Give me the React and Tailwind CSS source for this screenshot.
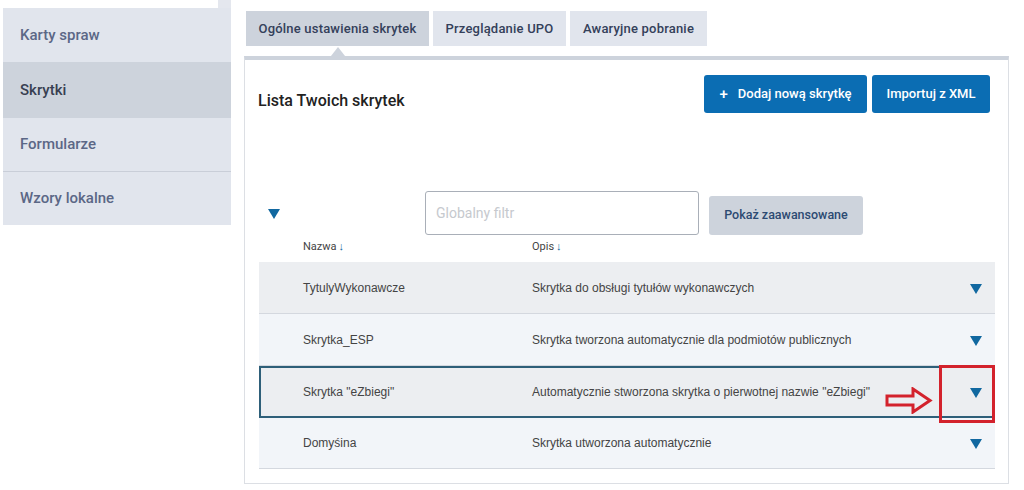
import React from "react";

const Tri = ({ className = "" }) => (
  <svg width="12" height="10" viewBox="0 0 12 10" className={className}>
    <polygon points="0,0 12,0 6,10" fill="#1168a0" />
  </svg>
);

const rows = [
  { name: "TytulyWykonawcze", desc: "Skrytka do obsługi tytułów wykonawczych", bg: "bg-[#eceef1]" },
  { name: "Skrytka_ESP", desc: "Skrytka tworzona automatycznie dla podmiotów publicznych", bg: "bg-[#f2f5f9]" },
  { name: 'Skrytka "eZbiegi"', desc: 'Automatycznie stworzona skrytka o pierwotnej nazwie "eZbiegi"', bg: "bg-[#eceef1]", sel: true },
  { name: "Domyśina", desc: "Skrytka utworzona automatycznie", bg: "bg-[#f2f5f9]" },
];

export default function App() {
  return (
    <div className="w-[1024px] h-[490px] bg-white flex overflow-hidden font-['Roboto',sans-serif]">
      {/* Sidebar */}
      <div className="ml-[3px] w-[228px] flex flex-col">
        <div className="h-[8px] flex">
          <div className="flex-1 bg-white" />
          <div className="w-[13px] bg-[#e4e7ee]" />
        </div>
        <div className="h-[54px] bg-[#e1e5ed] flex items-center pl-[17px] text-[15px] font-medium text-[#5b6786]">Karty spraw</div>
        <div className="h-[56px] bg-[#cdd3dc] flex items-center pl-[17px] text-[15px] font-medium text-[#383f52]">Skrytki</div>
        <div className="h-[54px] bg-[#e1e5ed] flex items-center pl-[17px] text-[15px] font-medium text-[#5b6786] border-b border-[#c9ced8]">Formularze</div>
        <div className="h-[53px] bg-[#e1e5ed] flex items-center pl-[17px] text-[15px] font-medium text-[#5b6786]">Wzory lokalne</div>
      </div>

      {/* Main */}
      <div className="ml-[13px] flex flex-col">
        <div className="mt-[11px] ml-[2px] flex gap-[4px] h-[35px] text-[13px] font-medium">
          <div className="w-[183px] bg-[#cdd3dc] text-[#34405a] flex items-center justify-center tracking-[0.2px]">Ogólne ustawienia skrytek</div>
          <div className="w-[133px] bg-[#e1e5ed] text-[#34405a] flex items-center justify-center tracking-[0.2px]">Przeglądanie UPO</div>
          <div className="w-[137px] bg-[#e1e5ed] text-[#34405a] flex items-center justify-center tracking-[0.2px]">Awaryjne pobranie</div>
        </div>

        <div className="relative mt-[10px] w-[765px] h-[428px] border border-[#dcdfe4] border-t-[4px] border-t-[#cdd3dc] flex flex-col">
          <div className="absolute left-[86px] -top-[13px] w-0 h-0 border-l-[7px] border-r-[7px] border-b-[9px] border-l-transparent border-r-transparent border-b-[#cdd3dc]" />

          {/* header */}
          <div className="flex items-start justify-between pl-[13px] pr-[18px] pt-[15px]">
            <div className="mt-[14px] text-[16px] font-medium text-[#222]">Lista Twoich skrytek</div>
            <div className="flex gap-[5px]">
              <div className="h-[38px] w-[163px] rounded-[3px] bg-[#0b6db3] text-white text-[13px] font-medium flex items-center justify-center">
                <span className="mr-[10px] text-[15px]">+</span>Dodaj nową skrytkę
              </div>
              <div className="h-[38px] w-[118px] rounded-[3px] bg-[#0b6db3] text-white text-[13px] font-medium flex items-center justify-center">Importuj z XML</div>
            </div>
          </div>

          {/* filter row */}
          <div className="mt-[78px] flex items-center ml-[23px]">
            <Tri className="mt-[2px]" />
            <div className="ml-[145px] w-[274px] h-[44px] border border-[#a9afb8] rounded-[3px] flex items-center pl-[10px] text-[14px] text-[#c6c9ce]">Globalny filtr</div>
            <div className="ml-[10px] mt-[4px] w-[154px] h-[39px] rounded-[3px] bg-[#cdd3dc] text-[#2c4a72] text-[12.5px] font-medium flex items-center justify-center">Pokaż zaawansowane</div>
          </div>

          {/* column headers */}
          <div className="mt-[4px] ml-[14px] flex text-[11px] text-[#444] h-[17px] items-center">
            <div className="ml-[44px] w-[229px]">Nazwa<span className="text-[#1168a0] ml-[2px]">↓</span></div>
            <div>Opis<span className="text-[#1168a0] ml-[2px]">↓</span></div>
          </div>

          {/* table */}
          <div className="mt-[6px] ml-[14px] w-[736px] flex flex-col font-['Liberation_Sans',Arial,sans-serif] text-[12px] text-[#444]">
            {rows.map((r, i) => (
              <div
                key={i}
                className={`relative ${i === 3 ? "h-[51px]" : "h-[52px]"} flex items-center ${r.bg} ${r.sel ? "border-2 border-[#2e5f79]" : "border-b border-[#d4d8df]"}`}
              >
                <div className={`${r.sel ? "ml-[42px]" : "ml-[44px]"} w-[229px]`}>{r.name}</div>
                <div className="flex-1">{r.desc}</div>
                <Tri className={`${r.sel ? "mr-[11px]" : "mr-[13px]"} mt-[2px]`} />
                {r.sel && (
                  <>
                    <svg className="absolute z-10 left-[624px] top-[19px]" width="48" height="27" viewBox="0 0 48 27">
                      <polygon points="2,9 28,9 28,2 45,13.5 28,25 28,18 2,18" fill="none" stroke="#d3222c" strokeWidth="3" strokeLinejoin="miter" />
                    </svg>
                    <div className="absolute z-10 -right-[2px] -top-[3px] w-[56px] h-[58px] border-[3px] border-[#d3222c]" />
                  </>
                )}
              </div>
            ))}
          </div>
        </div>
      </div>
    </div>
  );
}
